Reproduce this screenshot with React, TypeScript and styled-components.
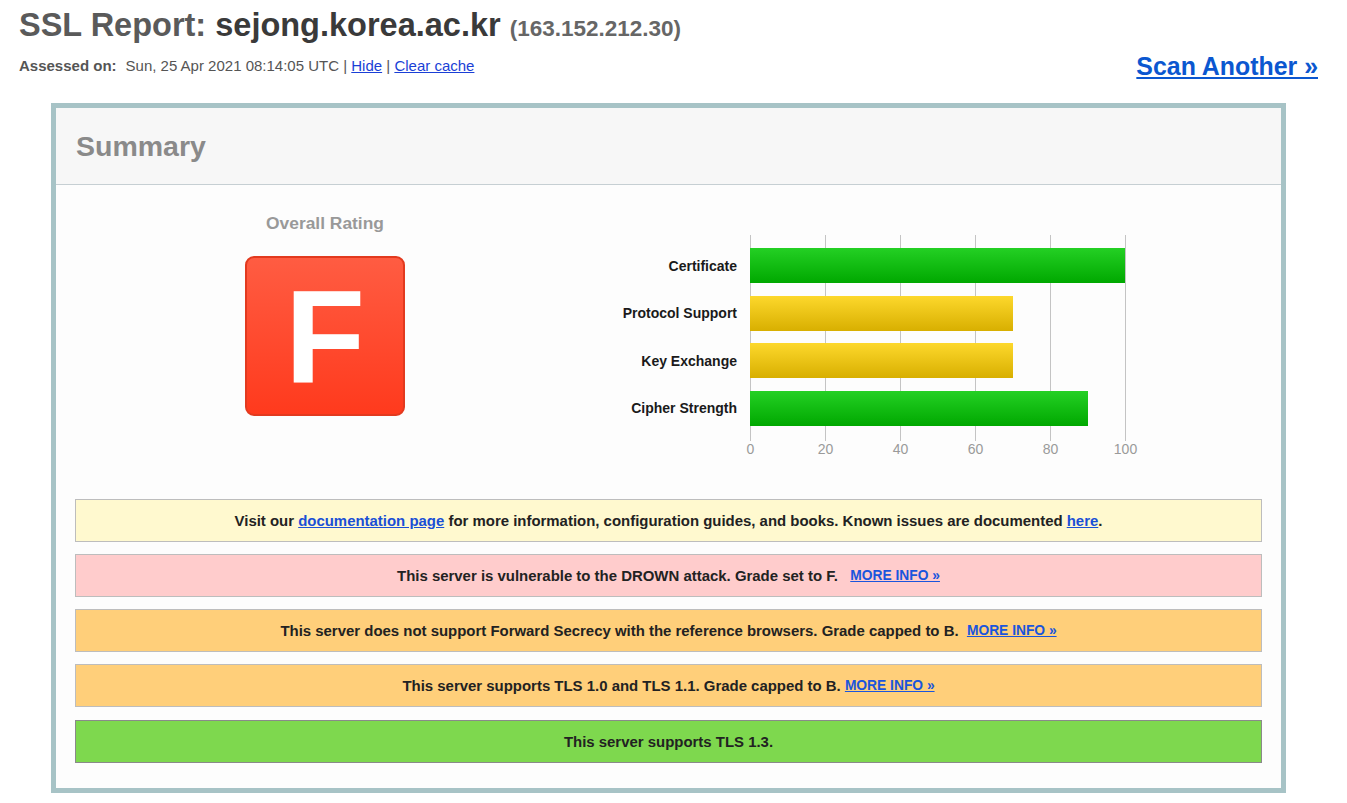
import React from "react";
import styled, { createGlobalStyle } from "styled-components";

const Global = createGlobalStyle`
  html, body { margin: 0; padding: 0; background: #ffffff; }
  body { font-family: "Liberation Sans", Arial, sans-serif; color: #222; }
`;

const Page = styled.div`
  padding: 6px 29px 12px 19px;
`;

const Header = styled.header`
  display: flex;
  justify-content: space-between;
  align-items: flex-start;
  height: 74px;
`;

const TitleBlock = styled.div`
  display: flex;
  flex-direction: column;
`;

const Title = styled.h1`
  margin: 0;
  font-size: 32.5px;
  line-height: 38px;
  font-weight: bold;
  color: #5a5a5a;
  white-space: nowrap;
`;

const Host = styled.span`
  color: #3a3a3a;
`;

const Ip = styled.span`
  font-size: 22.5px;
  color: #666;
`;

const Meta = styled.div`
  margin-top: 9px;
  font-size: 15px;
  line-height: 18px;
  color: #555;
`;

const MetaLabel = styled.b`
  color: #555;
  margin-right: 9px;
`;

const SmallLink = styled.a`
  color: #1a3fd6;
  text-decoration: underline;
`;

const ScanLink = styled.a`
  margin-top: 46px;
  font-size: 24.9px;
  line-height: 28px;
  font-weight: bold;
  color: #0b57d0;
  text-decoration: underline;
  white-space: nowrap;
`;

const Box = styled.section`
  margin: 23px 32px 0 32px;
  border: 5px solid #a7c3c6;
  background: #fdfdfd;
`;

const BoxHeader = styled.div`
  height: 76px;
  display: flex;
  align-items: center;
  padding-left: 20px;
  background: #f7f7f7;
  border-bottom: 1px solid #c6cfd3;
`;

const BoxTitle = styled.h2`
  margin: 0;
  font-size: 28.5px;
  font-weight: bold;
  color: #8a8a8a;
`;

const BoxBody = styled.div`
  padding: 28px 19px 25px;
`;

const RatingRow = styled.div`
  display: flex;
  align-items: flex-start;
`;

const RatingCol = styled.div`
  width: 500px;
  display: flex;
  flex-direction: column;
  align-items: center;
`;

const RatingLabel = styled.div`
  font-size: 17.4px;
  line-height: 20px;
  font-weight: bold;
  color: #999;
`;

const Grade = styled.div`
  margin-top: 23px;
  width: 160px;
  height: 160px;
  box-sizing: border-box;
  border: 2px solid #e23a1f;
  border-radius: 9px;
  background: linear-gradient(to bottom, #ff5c42, #ff3a1d);
  display: flex;
  align-items: center;
  justify-content: center;
  color: #fff;
  font-size: 131px;
  line-height: 1;
  font-weight: bold;
`;

const Chart = styled.div`
  margin-top: 22px;
  display: grid;
  grid-template-columns: 162px 376px;
  column-gap: 13px;
`;

const Labels = styled.div`
  padding: 13px 0 15px;
  display: flex;
  flex-direction: column;
  gap: 12.5px;
`;

const BarLabel = styled.div`
  height: 35px;
  display: flex;
  align-items: center;
  justify-content: flex-end;
  font-size: 14px;
  font-weight: bold;
  color: #1a1a1a;
  white-space: nowrap;
`;

const Plot = styled.div`
  padding: 13px 0 15px;
  display: flex;
  flex-direction: column;
  gap: 12.5px;
  background: repeating-linear-gradient(
    to right,
    #c4c4c4 0 1px,
    transparent 1px 75px
  );
`;

const Bar = styled.div<{ $tone: "green" | "yellow" }>`
  height: 35px;
  background: ${(p) =>
    p.$tone === "green"
      ? "linear-gradient(to bottom, #24d024, #00a800)"
      : "linear-gradient(to bottom, #fdd82c, #d8af00)"};
`;

const Axis = styled.div`
  grid-column: 2;
  width: 376px;
  display: flex;
  justify-content: space-between;
  font-size: 14px;
  line-height: 16px;
  color: #9a9a9a;
`;

const Tick = styled.span`
  width: 1px;
  display: flex;
  justify-content: center;
  white-space: nowrap;
`;

const Notices = styled.div`
  margin-top: 42px;
  display: flex;
  flex-direction: column;
  gap: 12.3px;
`;

const tones = {
  info: { bg: "#fff9cf", border: "#bdbdbd" },
  error: { bg: "#ffcccc", border: "#bdbdbd" },
  warn: { bg: "#ffcf7a", border: "#bdbdbd" },
  ok: { bg: "#7ed84e", border: "#8a8a8a" },
};

const Notice = styled.div<{ $tone: keyof typeof tones }>`
  height: 43px;
  box-sizing: border-box;
  display: flex;
  align-items: center;
  justify-content: center;
  background: ${(p) => tones[p.$tone].bg};
  border: 1px solid ${(p) => tones[p.$tone].border};
  font-size: 14.95px;
  font-weight: bold;
  color: #222;
  white-space: pre;
`;

const InlineLink = styled.a`
  color: #1a4fd6;
  text-decoration: underline;
`;

const MoreInfo = styled.a`
  color: #1a55dd;
  font-size: 13.8px;
  text-decoration: underline;
`;

const bars: { label: string; value: number; tone: "green" | "yellow" }[] = [
  { label: "Certificate", value: 100, tone: "green" },
  { label: "Protocol Support", value: 70, tone: "yellow" },
  { label: "Key Exchange", value: 70, tone: "yellow" },
  { label: "Cipher Strength", value: 90, tone: "green" },
];

export default function App() {
  return (
    <>
      <Global />
      <Page>
        <Header>
          <TitleBlock>
            <Title>
              SSL Report: <Host>sejong.korea.ac.kr</Host> <Ip>(163.152.212.30)</Ip>
            </Title>
            <Meta>
              <MetaLabel>Assessed on:</MetaLabel>Sun, 25 Apr 2021 08:14:05 UTC |{" "}
              <SmallLink href="#">Hide</SmallLink> |{" "}
              <SmallLink href="#">Clear cache</SmallLink>
            </Meta>
          </TitleBlock>
          <ScanLink href="#">Scan Another »</ScanLink>
        </Header>

        <Box>
          <BoxHeader>
            <BoxTitle>Summary</BoxTitle>
          </BoxHeader>
          <BoxBody>
            <RatingRow>
              <RatingCol>
                <RatingLabel>Overall Rating</RatingLabel>
                <Grade>F</Grade>
              </RatingCol>
              <Chart>
                <Labels>
                  {bars.map((b) => (
                    <BarLabel key={b.label}>{b.label}</BarLabel>
                  ))}
                </Labels>
                <Plot>
                  {bars.map((b) => (
                    <Bar
                      key={b.label}
                      $tone={b.tone}
                      style={{ width: `${(b.value / 100) * 375}px` }}
                    />
                  ))}
                </Plot>
                <Axis>
                  {[0, 20, 40, 60, 80, 100].map((t) => (
                    <Tick key={t}>{t}</Tick>
                  ))}
                </Axis>
              </Chart>
            </RatingRow>

            <Notices>
              <Notice $tone="info">
                Visit our <InlineLink href="#">documentation page</InlineLink> for more
                information, configuration guides, and books. Known issues are documented{" "}
                <InlineLink href="#">here</InlineLink>.
              </Notice>
              <Notice $tone="error">
                This server is vulnerable to the DROWN attack. Grade set to F.{"   "}
                <MoreInfo href="#">MORE INFO »</MoreInfo>
              </Notice>
              <Notice $tone="warn">
                This server does not support Forward Secrecy with the reference browsers.
                Grade capped to B.{"  "}
                <MoreInfo href="#">MORE INFO »</MoreInfo>
              </Notice>
              <Notice $tone="warn">
                This server supports TLS 1.0 and TLS 1.1. Grade capped to B.{" "}
                <MoreInfo href="#">MORE INFO »</MoreInfo>
              </Notice>
              <Notice $tone="ok">This server supports TLS 1.3.</Notice>
            </Notices>
          </BoxBody>
        </Box>
      </Page>
    </>
  );
}
